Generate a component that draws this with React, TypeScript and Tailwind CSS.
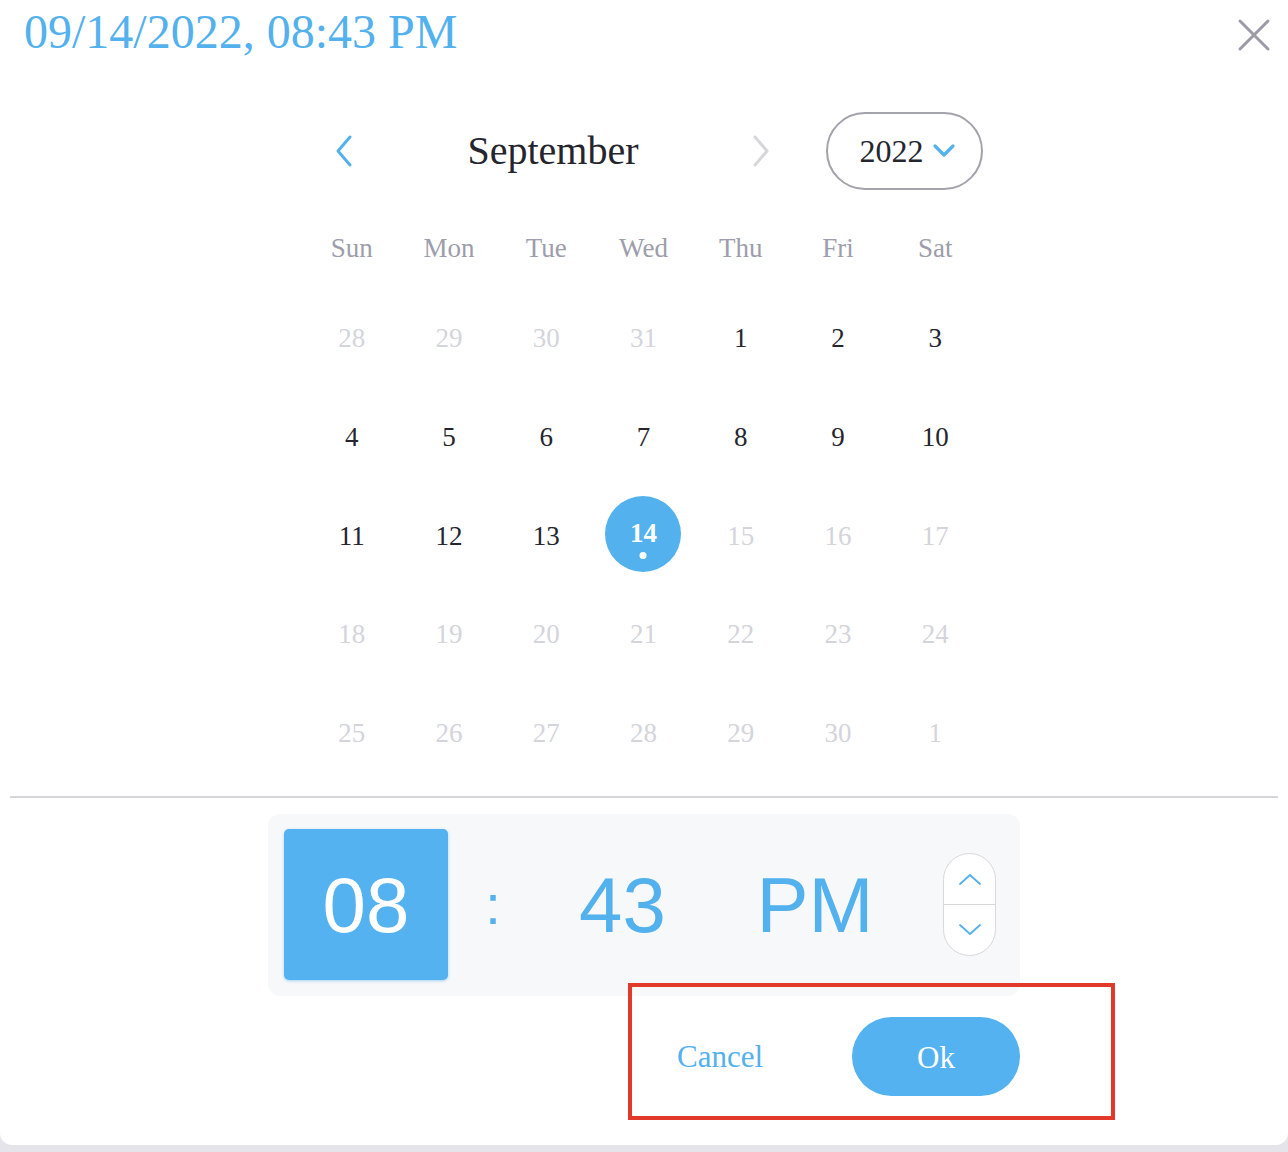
import React from "react";

const serif = { fontFamily: '"Liberation Serif", "Times New Roman", serif' };
const sans = { fontFamily: '"Liberation Sans", Arial, sans-serif' };

type Day = { n: number; muted: boolean; selected?: boolean };

const weeks: Day[][] = [
  [28, 29, 30, 31].map((n) => ({ n, muted: true })).concat([1, 2, 3].map((n) => ({ n, muted: false }))),
  [4, 5, 6, 7, 8, 9, 10].map((n) => ({ n, muted: false })),
  [
    { n: 11, muted: false },
    { n: 12, muted: false },
    { n: 13, muted: false },
    { n: 14, muted: false, selected: true },
    { n: 15, muted: true },
    { n: 16, muted: true },
    { n: 17, muted: true },
  ],
  [18, 19, 20, 21, 22, 23, 24].map((n) => ({ n, muted: true })),
  [25, 26, 27, 28, 29, 30, 1].map((n) => ({ n, muted: true })),
];

const weekdays = ["Sun", "Mon", "Tue", "Wed", "Thu", "Fri", "Sat"];

export default function App() {
  return (
    <div className="w-[1288px] h-[1152px] bg-[#e4e4ea] overflow-hidden" style={serif}>
      <div className="relative w-[1288px] h-[1145px] bg-white rounded-b-[12px]">
        {/* Header */}
        <div className="flex items-start justify-between pl-[24px] pr-[16px] pt-[4px] h-[80px]">
          <div className="text-[48px] leading-[56px] text-[#53b1ee]">09/14/2022, 08:43 PM</div>
          <svg width="36" height="36" viewBox="0 0 36 36" className="mt-[13px]">
            <path d="M4 4 L32 32 M32 4 L4 32" stroke="#9b9ba8" strokeWidth="3" strokeLinecap="round" />
          </svg>
        </div>

        {/* Calendar */}
        <div className="ml-[303px] w-[681px]">
          {/* Nav */}
          <div className="flex items-center h-[78px] mt-[32px]">
            <div className="w-[82px] flex justify-center">
              <svg width="20" height="34" viewBox="0 0 20 34">
                <path d="M16 3 L4 17 L16 31" fill="none" stroke="#53b1ee" strokeWidth="3" strokeLinecap="round" strokeLinejoin="round" />
              </svg>
            </div>
            <div className="w-[336px] text-center text-[40px] text-[#25252e]">September</div>
            <div className="w-[80px] flex justify-center">
              <svg width="20" height="34" viewBox="0 0 20 34">
                <path d="M4 3 L16 17 L4 31" fill="none" stroke="#d6d6db" strokeWidth="3" strokeLinecap="round" strokeLinejoin="round" />
              </svg>
            </div>
            <div className="ml-[25px] w-[157px] h-[78px] rounded-full border-2 border-[#a3a3ab] flex items-center justify-center gap-[8px]">
              <span className="text-[32px] text-[#25252e] ml-[6px]">2022</span>
              <svg width="24" height="16" viewBox="0 0 24 16">
                <path d="M3 3 L12 12 L21 3" fill="none" stroke="#53b1ee" strokeWidth="3.2" strokeLinecap="round" strokeLinejoin="round" />
              </svg>
            </div>
          </div>

          {/* Weekdays */}
          <div className="grid grid-cols-7 h-[50px] mt-[33px] items-center">
            {weekdays.map((d) => (
              <div key={d} className="text-center text-[27px] text-[#9d9dab]">
                {d}
              </div>
            ))}
          </div>

          {/* Days */}
          <div className="mt-[16px]">
            {weeks.map((w, i) => (
              <div key={i} className="grid grid-cols-7 h-[98.75px] items-center">
                {w.map((d, j) =>
                  d.selected ? (
                    <div key={j} className="flex justify-center">
                      <div className="relative w-[76px] h-[76px] rounded-full bg-[#53b1ee] flex items-center justify-center -mt-[3px]">
                        <span className="text-[27px] font-bold text-white leading-none -mt-[2px]">{d.n}</span>
                        <span className="absolute left-1/2 -translate-x-1/2 top-[56px] w-[7px] h-[7px] rounded-full bg-white" />
                      </div>
                    </div>
                  ) : (
                    <div
                      key={j}
                      className={
                        "text-center text-[27px] " + (d.muted ? "text-[#d4d4db]" : "text-[#25252e]")
                      }
                    >
                      {d.n}
                    </div>
                  )
                )}
              </div>
            ))}
          </div>
        </div>

        {/* Divider */}
        <div className="mx-[10px] h-[2px] bg-[#d5d5da] mt-[13px]" />

        {/* Time panel */}
        <div className="ml-[268px] mt-[16px] w-[752px] h-[182px] bg-[#f7f8fa] rounded-[12px] flex items-center pl-[16px]" style={sans}>
          <div className="w-[164px] h-[151px] bg-[#53b2ef] rounded-[5px] shadow-[0_1px_3px_rgba(83,178,239,0.5)] flex items-center justify-center text-white text-[78px] leading-none">
            08
          </div>
          <div className="w-[90px] text-center text-[#53b1ee] text-[56px] leading-none">:</div>
          <div className="w-[84px] text-center text-[#53b1ee] text-[78px] leading-none ml-[41px]">43</div>
          <div className="w-[176px] text-center text-[#53b1ee] text-[78px] leading-none ml-[64px]">PM</div>
          <div className="ml-[40px] w-[53px] h-[103px] rounded-full border-[1.5px] border-[#d8d8dd] bg-white flex flex-col overflow-hidden">
            <div className="flex-1 flex items-center justify-center border-b-[1.5px] border-[#d8d8dd]">
              <svg width="24" height="14" viewBox="0 0 24 14">
                <path d="M2 12 L12 3 L22 12" fill="none" stroke="#53b1ee" strokeWidth="1.8" strokeLinecap="round" strokeLinejoin="round" />
              </svg>
            </div>
            <div className="flex-1 flex items-center justify-center">
              <svg width="24" height="14" viewBox="0 0 24 14">
                <path d="M2 2 L12 11 L22 2" fill="none" stroke="#53b1ee" strokeWidth="1.8" strokeLinecap="round" strokeLinejoin="round" />
              </svg>
            </div>
          </div>
        </div>

        {/* Annotated action area */}
        <div className="absolute left-[628px] top-[983px] w-[487px] h-[137px] border-[4px] border-[#e13a2b] flex items-center">
          <div className="w-[184px] text-center text-[31px] text-[#53b1ee] mt-[12px] ml-[-4px]">Cancel</div>
          <div className="ml-[40px] w-[168px] h-[79px] rounded-full bg-[#53b2ef] flex items-center justify-center text-[31px] text-white mt-[10px] pt-[4px]">
            Ok
          </div>
        </div>
      </div>
    </div>
  );
}
